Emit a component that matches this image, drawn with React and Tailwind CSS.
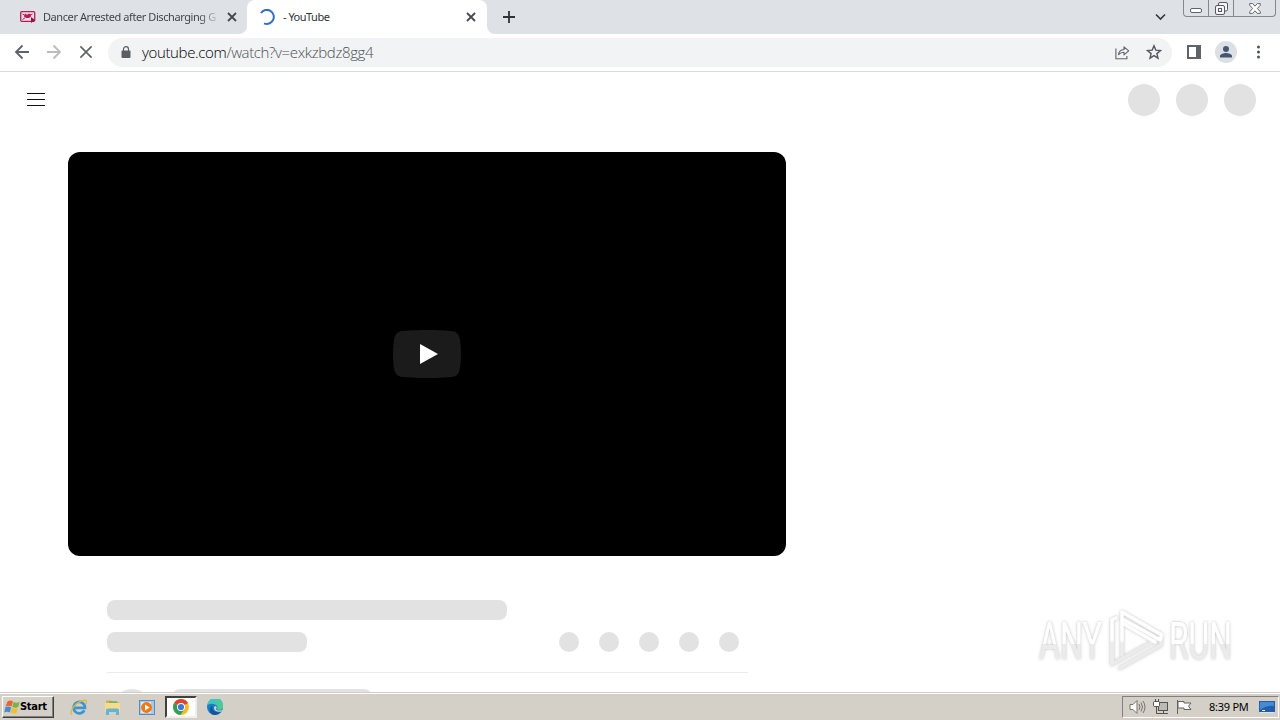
import React from 'react';

const Cross = ({ className, w = 2 }) => (
  <svg className={className} viewBox="0 0 10 10" fill="none" stroke="currentColor" strokeWidth={w}>
    <path d="M1 1L9 9M9 1L1 9" />
  </svg>
);

function TabStrip() {
  return (
    <div className="flex h-[34px] bg-[#dee1e6] text-[#45494e]">
      <div className="h-full w-[247px] bg-white">
        <div className="flex h-full items-center rounded-br-lg bg-[#dee1e6] pl-5 pr-[10px]">
          <svg className="h-3 w-4 shrink-0" viewBox="0 0 16 12">
            <rect x=".7" y=".7" width="14" height="9.6" rx="1" fill="#f3dce6" stroke="#b51f55" strokeWidth="1.3" />
            <path d="M2.5 3l2.5 1.4M12.5 3L10 4.4M2.5 8.5l2.5-1.7" stroke="#b51f55" strokeWidth="1" />
            <path d="M5 2.5l2 1.2 2-1.2 2 1v2L9 7H6L4 5.5z" fill="#b51f55" />
            <path d="M11 6l4 3-4 3z" fill="#8f1644" />
          </svg>
          <div className="ml-[7px] w-[177px] whitespace-nowrap bg-linear-to-r from-[#3c4043] from-88% to-[#dee1e6] bg-clip-text font-['Noto_Sans',sans-serif] text-[11px] tracking-[-0.42px] text-transparent">
            Dancer Arrested after Discharging G
          </div>
          <Cross w={1.8} className="ml-auto h-[10px] w-[10px]" />
        </div>
      </div>
      <div className="flex h-full w-[240px] items-center rounded-t-lg bg-white pl-3 pr-[11px]">
        <svg className="h-4 w-4" viewBox="0 0 16 16" fill="none" stroke="#346fc2" strokeWidth="2">
          <path d="M2 4A7 7 0 1 1 5 14.3" />
        </svg>
        <div className="ml-2 font-['Noto_Sans',sans-serif] text-[11px] tracking-[-0.5px] text-[#303134]">- YouTube</div>
        <Cross w={1.8} className="ml-auto h-[10px] w-[10px]" />
      </div>
      <div className="h-full w-4 bg-white">
        <div className="h-full rounded-bl-lg bg-[#dee1e6]" />
      </div>
      <svg className="mt-[11px] h-3 w-3" viewBox="0 0 12 12" stroke="#303236" strokeWidth="1.8">
        <path d="M6 0V12M0 6H12" />
      </svg>
      <svg className="ml-auto mt-[13px] h-2 w-[11px]" viewBox="0 0 11 8" fill="none" stroke="#34373b" strokeWidth="1.6">
        <path d="M1 1.5l4.5 4.5L10 1.5" />
      </svg>
      <div className="ml-[17px] mr-[4px] flex h-[17px] w-[93px] divide-x divide-[#85888f] rounded-b border-x border-b border-[#85888f]">
        <div className="flex w-[25px] justify-center pt-2">
          <div className="h-[5px] w-3 rounded-[2px] border border-[#5f636c] bg-white" />
        </div>
        <div className="flex w-[25px] justify-center pt-[2px]">
          <svg className="h-[13px] w-[13px]" viewBox="0 0 13 13" fill="#f5f5f8" stroke="#555963">
            <rect x="3.5" y=".5" width="9" height="8.5" rx="1.5" />
            <rect x=".5" y="3.5" width="9" height="9" rx="1.5" />
            <rect x="3.5" y="6.5" width="3" height="3" />
          </svg>
        </div>
        <div className="flex flex-1 justify-center pt-[3px]">
          <svg className="h-[11px] w-3" viewBox="0 0 12 11" fill="#fff" stroke="#555963" strokeWidth=".9">
            <path d="M.7.6h3L6 3.2 8.3.6h3v1.6L8.4 5.5l2.9 3.3v1.6h-3L6 7.8l-2.3 2.6h-3V8.8l2.9-3.3L.7 2.2z" />
          </svg>
        </div>
      </div>
    </div>
  );
}

function Toolbar() {
  return (
    <div className="flex h-[38px] items-center border-b border-[#d8dadd] bg-white pb-px pl-[14px] text-[#5f6368]">
      <svg className="h-4 w-4" viewBox="0 0 16 16" fill="none" stroke="#5f6368" strokeWidth="1.8">
        <path d="M15 8H2M8.5 1.5L2 8l6.5 6.5" />
      </svg>
      <svg className="ml-4 h-4 w-4" viewBox="0 0 16 16" fill="none" stroke="#b9bbbe" strokeWidth="1.8">
        <path d="M1 8h13M7.5 1.5L14 8l-6.5 6.5" />
      </svg>
      <Cross w={1.2} className="ml-[17px] h-[14px] w-[14px]" />
      <div className="ml-[15px] flex h-[29px] w-[1064px] items-center rounded-full bg-[#f1f3f4] pl-[13px] pr-[10px]">
        <svg className="h-[13px] w-[10px]" viewBox="0 0 10 13">
          <rect x=".5" y="4.5" width="9" height="7.5" rx="1" fill="#5a5d61" />
          <path d="M2.5 5V3.2a2.5 2.5 0 0 1 5 0V5" fill="none" stroke="#5a5d61" strokeWidth="1.2" />
        </svg>
        <div className="ml-[11px] whitespace-nowrap font-['Open_Sans','Noto_Sans',sans-serif] text-[15px] font-light tracking-[-0.36px] text-[#4c5054]">
          <span className="text-[#000]">youtube.com</span>/watch?v=exkzbdz8gg4
        </div>
        <svg className="ml-auto h-[15px] w-4" viewBox="0 0 16 15" fill="none" stroke="currentColor" strokeWidth="1.1">
          <path d="M.9 3.5v10.2h11V11" />
          <path d="M3.5 9.7c.5-3.5 2.3-5 5.5-5.2V1.8l4.7 4-4.7 4V7.3C6.8 7.3 5 8 3.5 9.7z" strokeLinejoin="round" />
        </svg>
        <svg className="ml-[15px] h-4 w-4" viewBox="0 0 16 16" fill="none" stroke="#55585c" strokeWidth="1.4">
          <path d="M8 1.8l1.8 4.3 4.7.4-3.6 3.1 1.1 4.6L8 11.7l-4 2.5 1.1-4.6-3.6-3.1 4.7-.4z" />
        </svg>
      </div>
      <svg className="ml-[15px] h-[14px] w-[14px]" viewBox="0 0 14 14">
        <rect x="1" y="1" width="12" height="12" fill="none" stroke="#5f6368" strokeWidth="2" />
        <rect x="9" y="1" width="4" height="12" fill="#5f6368" />
      </svg>
      <svg className="ml-[14px] h-[22px] w-[22px]" viewBox="0 0 22 22">
        <circle cx="11" cy="11" r="11" fill="#dcdfe4" />
        <circle cx="11" cy="8" r="3" fill="#485571" />
        <path d="M5 16.5v-1.6c0-2 4-3 6-3s6 1 6 3v1.6z" fill="#485571" />
      </svg>
      <svg className="ml-[19px] h-[14px] w-[4px]" viewBox="0 0 4 14" fill="#505357">
        <circle cx="2.5" cy="2" r="1.5" /><circle cx="2.5" cy="7" r="1.5" /><circle cx="2.5" cy="12" r="1.5" />
      </svg>
    </div>
  );
}

function Watermark() {
  return (
    <svg className="absolute left-[1026px] top-[528px] h-[84px] w-[220px] overflow-visible" viewBox="1026 600 220 84">
      <defs>
        <filter id="halo" x="-20%" y="-20%" width="140%" height="140%">
          <feDropShadow dx="0" dy="0" stdDeviation="1.8" floodColor="#777" floodOpacity=".5" />
        </filter>
        <linearGradient id="fade" x1="0" y1="0" x2="0" y2="1">
          <stop offset=".54" stopColor="#fff" /><stop offset=".55" stopColor="#ebebeb" />
        </linearGradient>
        <linearGradient id="post" gradientUnits="userSpaceOnUse" x1="0" y1="610" x2="0" y2="670">
          <stop offset=".5" stopColor="#fff" /><stop offset=".55" stopColor="#ececec" />
        </linearGradient>
      </defs>
      <g filter="url(#halo)" fill="url(#fade)" fontFamily="Roboto, sans-serif" fontSize="51">
        <text x="1039" y="659" textLength="63" lengthAdjust="spacingAndGlyphs">ANY</text>
        <text x="1169" y="659" textLength="63" lengthAdjust="spacingAndGlyphs">RUN</text>
      </g>
      <g filter="url(#halo)" fill="none" strokeWidth="3.4" strokeLinejoin="round" strokeLinecap="round">
        <path d="M1116 618l-4 2v44l49-27" stroke="#ebebeb" />
        <path d="M1120 668l41-23v-6" stroke="#ebebeb" />
        <path d="M1116 618l-4 2v44" stroke="url(#post)" />
        <path d="M1122 655V612l40 23-2 5-36-20" stroke="url(#post)" />
        <path d="M1124 624l31 18" stroke="#fff" />
      </g>
    </svg>
  );
}

function Page() {
  return (
    <main className="relative h-[620px] overflow-hidden bg-white">
      <header className="flex h-14 items-center justify-between pl-[27px] pr-6">
        <div className="mb-[2px] flex h-[13px] w-[18px] flex-col justify-between">
          <i className="h-px bg-[#111]" /><i className="h-px bg-[#111]" /><i className="h-px bg-[#111]" />
        </div>
        <div className="flex gap-4">
          {[0, 1, 2].map((i) => <div key={i} className="h-8 w-8 rounded-full bg-[#e2e2e2]" />)}
        </div>
      </header>
      <div className="ml-[68px] mt-6 flex h-[404px] w-[718px] items-center justify-center rounded-xl bg-black">
        <svg className="h-12 w-[68px]" viewBox="0 0 68 48">
          <path d="M66.52 7.74c-.78-2.93-2.49-5.41-5.42-6.19C55.79.13 34 0 34 0S12.21.13 6.9 1.55c-2.93.78-4.63 3.26-5.42 6.19C.06 13.05 0 24 0 24s.06 10.95 1.48 16.26c.78 2.93 2.49 5.41 5.42 6.19C12.21 47.87 34 48 34 48s21.79-.13 27.1-1.55c2.93-.78 4.64-3.26 5.42-6.19C67.94 34.95 68 24 68 24s-.06-10.95-1.48-16.26z" fill="#1b1b1b" />
          <path d="M45 24L27 14v20" fill="#fff" />
        </svg>
      </div>
      <div className="ml-[107px] mt-11 w-[641px]">
        <div className="h-5 w-[400px] rounded-lg bg-[#e2e2e2]" />
        <div className="mt-3 flex justify-between pr-[9px]">
          <div className="h-5 w-[200px] rounded-lg bg-[#e2e2e2]" />
          <div className="flex gap-5">
            {[0, 1, 2, 3, 4].map((i) => <div key={i} className="h-5 w-5 rounded-full bg-[#e2e2e2]" />)}
          </div>
        </div>
        <div className="mt-5 flex border-t border-[#ebebeb] pl-[5px] pt-4">
          <div className="h-10 w-10 rounded-full bg-[#e2e2e2]" />
          <div className="ml-5 h-5 w-[200px] rounded-lg bg-[#e2e2e2]" />
        </div>
      </div>
      <Watermark />
    </main>
  );
}

function Taskbar() {
  return (
    <footer className="flex h-7 items-center border-t border-[#d0cdc6] bg-[#d4d0c8] pt-px font-['DejaVu_Sans_Condensed','DejaVu_Sans',sans-serif] shadow-[inset_0_1px_0_#fff]">
      <div className="ml-[2px] flex h-[22px] w-[52px] items-center border border-b-[#404040] border-l-white border-r-[#404040] border-t-white pl-px shadow-[inset_-1px_-1px_0_#808080]">
        <svg className="h-4 w-4 shrink-0" viewBox="-.5 0 16 15">
          <path d="M3 2q3-2 5.5 0L7 7q-3-1.5-6 0z" fill="#e9652f" />
          <path d="M9.2 2.5q3 1.5 6-.2L13.7 7.5q-3 1.5-6-.2z" fill="#76b443" />
          <path d="M.9 7.7q3-1.5 5.8.2L5.3 13Q2.5 11.5-.2 13z" fill="#468bd1" />
          <path d="M7.4 8.2q3 1.5 6 .2L12 13.5q-3 1.3-6-.2z" fill="#f1bd31" />
        </svg>
        <span className="text-[11px] font-bold tracking-[-0.3px] text-black">Start</span>
      </div>
      <svg className="ml-[16px] h-[17px] w-[18px]" viewBox="0 0 18 17" fill="none">
        <path d="M14.3 11.4A5.7 5.7 0 1 1 15 8.8H4" stroke="#3897d4" strokeWidth="2.7" />
        <path d="M2 15.5C-2 12 7 3 13 1.5c4-1 4 1.2 2.7 3.5" stroke="#e1b63f" strokeWidth="1.3" />
      </svg>
      <svg className="ml-[16px] h-[17px] w-[17px]" viewBox="0 0 17 17">
        <path d="M2 3V1.5h5L8.5 3H15v9H2z" fill="#d9ad4c" />
        <path d="M1 4h15v9H1z" fill="#f5dc8b" />
        <path d="M5 3h8" stroke="#6eaf73" strokeWidth="1.5" />
        <path d="M2 16v-5q0-1.5 2-1.5h9q2 0 2 1.5v5h-3v-3H5v3z" fill="#64b4d8" />
      </svg>
      <svg className="ml-[18px] h-[17px] w-4" viewBox="0 0 16 17">
        <rect x=".5" y="1.5" width="15" height="14" fill="#a5c9e7" stroke="#5d8bb9" />
        <rect x="2" y="3" width="10" height="11" fill="#d9edf7" />
        <circle cx="7.5" cy="8.5" r="5.4" fill="#ed7815" />
        <path d="M6 5.5l4.7 3L6 11.5z" fill="#fff" />
      </svg>
      <div className="ml-[10px] flex h-[22px] w-8 items-center justify-center border-2 border-b-[#eee] border-l-[#404040] border-r-[#eee] border-t-[#404040] bg-white">
        <svg className="h-4 w-4" viewBox="0 0 16 16">
          <circle cx="8" cy="8" r="8" fill="#f5bd24" />
          <path d="M8 8L1.1 4A8 8 0 0 1 15 4z" fill="#df4433" />
          <path d="M8 8L1.1 4A8 8 0 0 0 7.5 16l4-6z" fill="#339e57" />
          <circle cx="8" cy="8" r="4" fill="#fff" /><circle cx="8" cy="8" r="3.1" fill="#3978e2" />
        </svg>
      </div>
      <svg className="ml-[10px] h-4 w-4" viewBox="0 0 16 16">
        <circle cx="8" cy="8" r="8" fill="#187dc7" />
        <path d="M.6 5A7.8 7.8 0 0 1 16 7.5c0 3.3-3.8 4.2-6 2.5 1-2 .5-4-2-4.5C5.5 4.5 3 4.5.6 6z" fill="#40c5c0" />
        <path d="M10 0.3A8 8 0 0 1 16 7.5c0 3.3-3.8 4.2-6 2.5 1-1.5 1-3 0-4z" fill="#55cb7c" opacity=".65" />
        <path d="M5.5 7C4.5 10 7 13.5 11 13.3q2 0 3-.6A8 8 0 0 1 5 15.3C1.5 12.5 2.5 8 5.5 7z" fill="#1256a0" />
        <path d="M8.5 7c1.5.3 1.4 1.8.6 2.7-.6.8 1.4 2 3.4 1.9 1.4 0 2.2-.4 2.8-.8l-1.1 1.7c-3 .8-6.8-.3-7.2-3C6.8 8 7.6 7.2 8.5 7z" fill="#d4d0c8" />
      </svg>
      <div className="ml-auto mr-px flex h-[22px] w-[157px] items-center border border-b-white border-l-[#808080] border-r-white border-t-[#808080] pl-[6px]">
        <svg className="h-4 w-[17px]" viewBox="0 0 17 16" fill="none" stroke="#77756f">
          <path d="M1 5.5h3l4-4v13l-4-4H1z" fill="#fafafa" />
          <path d="M10 5q2 3 0 6M12 3.5q3 4.5 0 9M14 2q4 6 0 12" />
        </svg>
        <svg className="ml-[7px] h-4 w-4" viewBox="0 0 16 16" fill="none" stroke="#55534e">
          <rect x="5.5" y="3.5" width="9" height="8" fill="#bcbab5" />
          <path d="M6 14.5h9M10.5 12v2M2.5 0v3M5.5 0v3M3.5 7v7.5H7" />
          <rect x=".5" y="2.5" width="6" height="5" rx="1" fill="#fff" />
        </svg>
        <svg className="ml-[7px] h-4 w-4" viewBox="0 0 16 16" fill="#fcfcfc" stroke="#65635e">
          <path d="M1.5 1v14M2 2.5h6v1.5h7l-2.5 3.2L15 10.5H8V9H2z" />
        </svg>
        <span className="ml-[17px] w-[41px] whitespace-nowrap font-['Noto_Sans',sans-serif] text-[11px] tracking-[-0.25px] text-black">8:39 PM</span>
        <svg className="ml-[9px] h-[14px] w-4" viewBox="0 0 16 14">
          <rect x="0" y="1" width="16" height="11" fill="#245eaa" />
          <path d="M1 2h14v4Q8 5 1 10z" fill="#438bd5" />
          <path d="M1 12.5h14" stroke="#d9e5ef" /><path d="M3 10.5h3" stroke="#fff" />
        </svg>
      </div>
    </footer>
  );
}

export default function App() {
  return (
    <div className="h-[720px] w-[1280px] overflow-hidden bg-white">
      <TabStrip />
      <Toolbar />
      <Page />
      <Taskbar />
    </div>
  );
}
